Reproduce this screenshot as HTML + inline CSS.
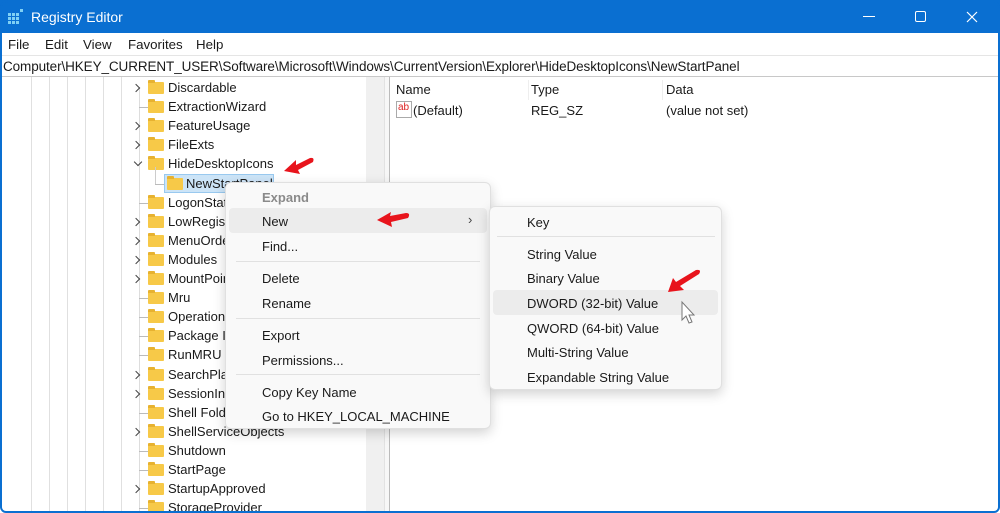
<!DOCTYPE html>
<html><head><meta charset="utf-8"><style>
*{margin:0;padding:0;box-sizing:border-box}
body{width:1000px;height:513px;background:#fff;font-family:"Liberation Sans",sans-serif;font-size:13px;color:#1a1a1a;position:relative;overflow:hidden}
.win{position:absolute;left:0;top:0;width:1000px;height:513px;overflow:hidden;background:#fff}
.frame{position:absolute;left:0;top:0;width:1000px;height:513px;border:2px solid #0a6fd1;border-radius:8px 8px 6px 6px;pointer-events:none}
.title{position:absolute;left:0;top:0;width:1000px;height:33px;background:#0a6fd1;color:#fff;font-size:14px}
.a{position:absolute;white-space:nowrap}
.menu{top:37px;font-size:13.3px}
.addr{position:absolute;left:0;top:55px;width:1000px;height:22px;border-top:1px solid #e5e5e5;border-bottom:1px solid #c8c8c8;font-size:13.5px;padding:3px 0 0 3px;letter-spacing:-0.1px}
.vl{position:absolute;top:77px;width:1px;height:440px;background:#e0e0e0}
.fold{position:absolute;width:16px;height:12px;background:#f7c948;border-radius:1px}
.fold:before{content:"";position:absolute;left:0;top:-2px;width:7px;height:3px;background:#e7b230;border-radius:1px 1px 0 0}
.chev{position:absolute;width:6px;height:6px;border-right:1.3px solid #444;border-bottom:1.3px solid #444;transform:rotate(-45deg)}
.dash{position:absolute;width:9px;height:1px;background:#bbb}
.cm{position:absolute;background:#f9f9f9;border:1px solid #e0e0e0;border-radius:6px;box-shadow:0 4px 12px rgba(0,0,0,.18)}
.sep{position:absolute;height:1px;background:#e1e1e1}
.hl{position:absolute;background:#ececec;border-radius:4px}
</style></head><body>
<div class="win">
<div class="title">
 <svg class="a" style="left:8px;top:9px" width="16" height="16" viewBox="0 0 16 16"><g fill="#7fd0f5"><rect x="0" y="4" width="3" height="3"/><rect x="4" y="4" width="3" height="3"/><rect x="0" y="8" width="3" height="3"/><rect x="4" y="8" width="3" height="3"/><rect x="8" y="8" width="3" height="3"/><rect x="0" y="12" width="3" height="3"/><rect x="4" y="12" width="3" height="3"/><rect x="8" y="12" width="3" height="3"/><rect x="8" y="4" width="3" height="3"/><rect x="12" y="0" width="3" height="3"/></g></svg>
 <div class="a" style="left:31px;top:9px">Registry Editor</div>
 <div class="a" style="left:863px;top:16px;width:12px;height:1px;background:#fff"></div>
 <div class="a" style="left:915px;top:11px;width:11px;height:11px;border:1px solid #fff;border-radius:2px"></div>
 <svg class="a" style="left:966px;top:11px" width="12" height="12"><path d="M1 1L11 11M11 1L1 11" stroke="#fff" stroke-width="1.2"/></svg>
</div>
<div class="a menu" style="left:8px">File</div>
<div class="a menu" style="left:45px">Edit</div>
<div class="a menu" style="left:83px">View</div>
<div class="a menu" style="left:128px">Favorites</div>
<div class="a menu" style="left:196px">Help</div>
<div class="addr">Computer\HKEY_CURRENT_USER\Software\Microsoft\Windows\CurrentVersion\Explorer\HideDesktopIcons\NewStartPanel</div>

<div class="vl" style="left:31px"></div><div class="vl" style="left:49px"></div><div class="vl" style="left:67px"></div><div class="vl" style="left:85px"></div><div class="vl" style="left:103px"></div><div class="vl" style="left:121px"></div>
<div class="vl" style="left:139px;top:88px;height:430px;background:#ddd"></div>
<div class="a" style="left:366px;top:77px;width:18px;height:440px;background:#f0f0f0"></div>
<div class="a" style="left:384px;top:77px;width:6px;height:440px;background:#f7f7f7;border-left:1px solid #e2e2e2;border-right:1px solid #bbb"></div>

<div id="tree"></div>

<div class="a" style="left:396px;top:82px">Name</div>
<div class="a" style="left:528px;top:80px;width:1px;height:20px;background:#eee"></div>
<div class="a" style="left:531px;top:82px">Type</div>
<div class="a" style="left:662px;top:80px;width:1px;height:20px;background:#eee"></div>
<div class="a" style="left:666px;top:82px">Data</div>
<div class="a" style="left:396px;top:101px;width:16px;height:17px;border:1px solid #aaa;background:#fff;color:#d22;font-size:10px;line-height:12px;padding-left:1px">ab</div>
<div class="a" style="left:413px;top:103px">(Default)</div>
<div class="a" style="left:531px;top:103px">REG_SZ</div>
<div class="a" style="left:666px;top:103px">(value not set)</div>

<div class="cm" style="left:225px;top:182px;width:266px;height:247px">
 <div class="hl" style="left:3px;top:25px;width:258px;height:25px"></div>
 <div class="a" style="left:36px;top:7px;color:#8a8a8a;font-weight:bold">Expand</div>
 <div class="a" style="left:36px;top:31px">New</div>
 <div class="a" style="left:242px;top:29px;color:#444">›</div>
 <div class="a" style="left:36px;top:56px">Find...</div>
 <div class="sep" style="left:10px;top:78px;width:244px"></div>
 <div class="a" style="left:36px;top:88px">Delete</div>
 <div class="a" style="left:36px;top:113px">Rename</div>
 <div class="sep" style="left:10px;top:135px;width:244px"></div>
 <div class="a" style="left:36px;top:145px">Export</div>
 <div class="a" style="left:36px;top:170px">Permissions...</div>
 <div class="sep" style="left:10px;top:191px;width:244px"></div>
 <div class="a" style="left:36px;top:202px">Copy Key Name</div>
 <div class="a" style="left:36px;top:226px">Go to HKEY_LOCAL_MACHINE</div>
</div>
<div class="cm" style="left:489px;top:206px;width:233px;height:184px">
 <div class="hl" style="left:3px;top:83px;width:225px;height:25px"></div>
 <div class="a" style="left:37px;top:8px">Key</div>
 <div class="sep" style="left:7px;top:29px;width:218px"></div>
 <div class="a" style="left:37px;top:40px">String Value</div>
 <div class="a" style="left:37px;top:64px">Binary Value</div>
 <div class="a" style="left:37px;top:89px">DWORD (32-bit) Value</div>
 <div class="a" style="left:37px;top:114px">QWORD (64-bit) Value</div>
 <div class="a" style="left:37px;top:138px">Multi-String Value</div>
 <div class="a" style="left:37px;top:163px">Expandable String Value</div>
</div>

<svg class="a" style="left:0;top:0" width="1000" height="513">
 <g fill="#e8141c">
  <path d="M284 171 L296 160 L296 165 L310 158 Q315 157 313 162 L298 170 L300 174 Z"/>
  <path d="M377 220 L391 212 L390 216 L406 213 Q411 213 408 218 L391 222 L392 227 Z"/>
  <path d="M668 292 L673 278 L676 282 L696 270 Q702 269 699 274 L680 286 L684 290 Z"/>
 </g>
 <path d="M682 302 L682 320 L686 316 L689 323 L692 322 L689 315 L694 315 Z" fill="#fff" stroke="#777" stroke-width="1"/>
</svg>
<div class="frame"></div>
</div>
<script>
var rows=[["Discardable",1],["ExtractionWizard",0],["FeatureUsage",1],["FileExts",1],["HideDesktopIcons",2],["NewStartPanel",3],["LogonStats",0],["LowRegistry",1],["MenuOrder",1],["Modules",1],["MountPoints2",1],["Mru",0],["OperationStatusManager",0],["Package Installation",0],["RunMRU",0],["SearchPlatform",1],["SessionInfo",1],["Shell Folders",0],["ShellServiceObjects",1],["Shutdown",0],["StartPage",0],["StartupApproved",1],["StorageProvider",0]];
var h="";
rows.forEach(function(r,i){var y=79+i*19.1;
 if(r[1]==3){h+='<div class="a" style="left:164px;top:'+(y-1)+'px;width:110px;height:19px;background:#cce4f7;border:1px solid #99c9ef"></div>';
  h+='<div class="dash" style="left:155px;top:'+(y+9)+'px"></div><div class="vl" style="left:155px;top:'+(y-8)+'px;height:17px;background:#ccc"></div>';
  h+='<div class="fold" style="left:167px;top:'+(y+3)+'px"></div><div class="a" style="left:186px;top:'+(y+1)+'px">'+r[0]+'</div>';return;}
 if(r[1]==1)h+='<div class="chev" style="left:133px;top:'+(y+6)+'px"></div>';
 else if(r[1]==2)h+='<div class="chev" style="left:135px;top:'+(y+4)+'px;transform:rotate(45deg)"></div>';
 else h+='<div class="dash" style="left:139px;top:'+(y+9)+'px"></div>';
 h+='<div class="fold" style="left:148px;top:'+(y+3)+'px"></div><div class="a" style="left:168px;top:'+(y+1)+'px">'+r[0]+'</div>';});
document.getElementById("tree").innerHTML=h;
</script>
</body></html>
